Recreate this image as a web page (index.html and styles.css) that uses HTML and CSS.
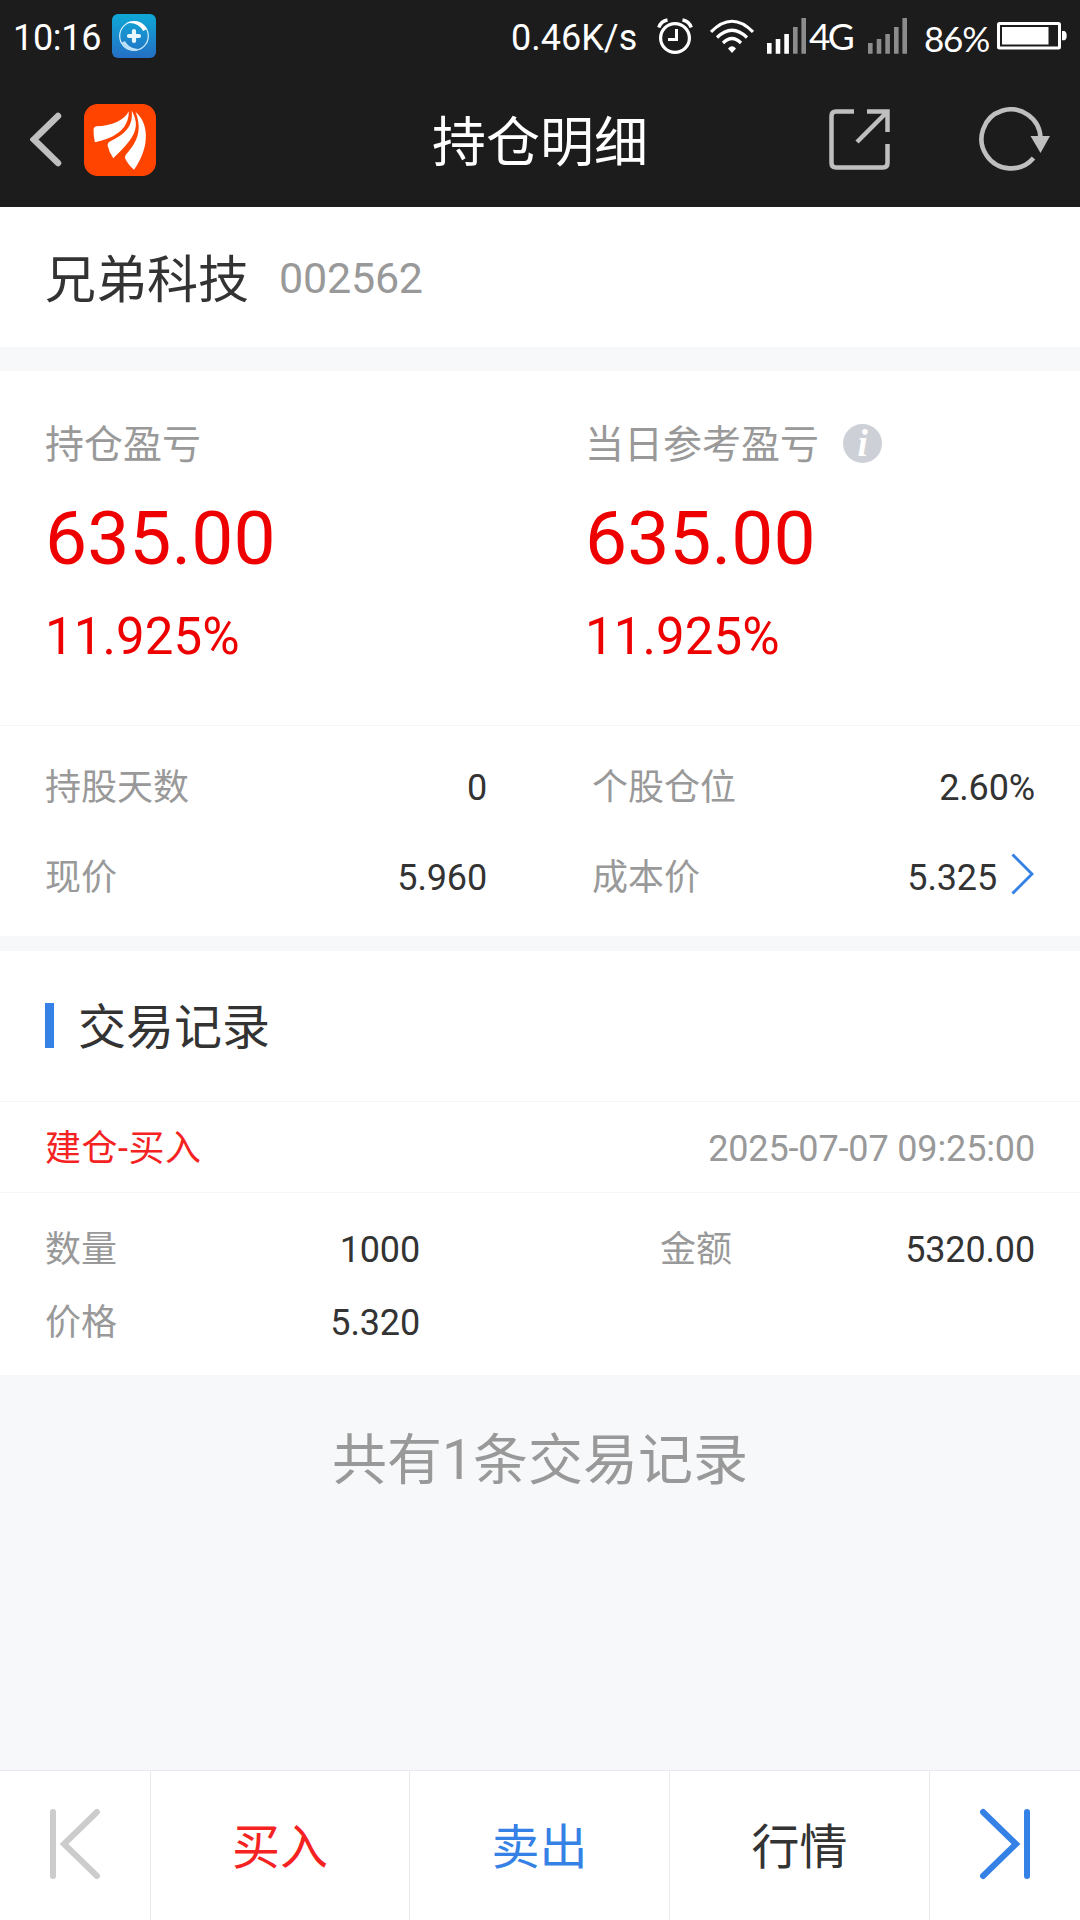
FILE: index.html
```html
<!DOCTYPE html>
<html lang="zh-CN">
<head>
<meta charset="utf-8">
<title>持仓明细</title>
<link rel="stylesheet" href="styles.css">
</head>
<body>
<div class="page">
  <div class="status">
    <span class="clock">10:16</span>
    <svg class="app-badge" width="44" height="44" viewBox="0 0 44 44">
      <defs>
        <linearGradient id="badge" x1="0" y1="0" x2="0" y2="1"><stop offset="0" stop-color="#0ea8d6"/><stop offset="1" stop-color="#246fc4"/></linearGradient>
      </defs>
      <rect width="44" height="44" rx="6" fill="url(#badge)"/>
      <circle cx="22" cy="22" r="14.3" fill="none" stroke="#d8effb" stroke-width="1.2"/>
      <path d="M14 9.5 C21 5 31 7 35 15 L31 17 C28 11 21 8 14 9.5Z" fill="#fff"/>
      <path d="M30 34.5 C23 39 13 37 9 29 L13 27 C16 33 23 36 30 34.5Z" fill="#b9e0f7"/>
      <path d="M22 17v10M17 22h10" stroke="#e8f6fd" stroke-width="4.2" stroke-linecap="round"/>
    </svg>
    <div class="status-right">
      <span class="speed">0.46K/s</span>
      <svg class="alarm" width="36" height="36" viewBox="0 0 36 36" fill="none" stroke="#fff">
        <circle cx="18" cy="20" r="14.4" stroke-width="3.2"/>
        <path d="M19.5 11v10.5H11" stroke-width="3"/>
        <path d="M1.8 9.5Q4 3 10.5 2M25.5 2Q32 3 34.2 9.5" stroke-width="3.4"/>
      </svg>
      <svg class="wifi" width="44" height="35" viewBox="0 0 44 35" fill="none" stroke="#fff" stroke-width="3.2">
        <path d="M1 13Q22 -8.500 43 13M7 18.500Q22 4 37 18.500M13 24Q22 15 31 24"/>
        <path d="M22 34l-4-4.500q4-4.500 8 0z" fill="#fff" stroke="none"/>
      </svg>
      <svg class="signal" width="39" height="36" viewBox="0 0 39 36">
        <path d="M0 25h4.600v10.700H0zM8.700 21h4.600v14.700H8.700zM17.300 16h4.600v19.700h-4.600z" fill="#fff"/>
        <path d="M26 9h4.600v26.700H26zM34.400 0H39v35.700h-4.600z" fill="#8c8c8c"/>
      </svg>
      <span class="net">4G</span>
      <svg class="signal-off" width="39" height="36" viewBox="0 0 39 36">
        <path d="M0 25h4.600v10.700H0zM8.700 21h4.600v14.700H8.700zM17.300 16h4.600v19.700h-4.600zM26 9h4.600v26.700H26zM34.400 0H39v35.700h-4.600z" fill="#8c8c8c"/>
      </svg>
      <span class="percent">86%</span>
      <svg class="battery" width="70" height="28" viewBox="0 0 70 28">
        <rect x="1.500" y="1.500" width="61" height="24.500" rx="1" fill="none" stroke="#fff" stroke-width="3"/>
        <path d="M5 5h46.500v17.500H5zM65 9h2.500q2.200 1 2.200 4.700t-2.200 4.600H65z" fill="#fff"/>
      </svg>
    </div>
  </div>

  <header class="nav">
    <svg class="back" width="32" height="56" viewBox="0 0 32 56"><path d="M28 4L4 27.500L28 51" fill="none" stroke="#bfbfbf" stroke-width="6.500" stroke-linecap="round"/></svg>
    <svg class="logo" width="72" height="72" viewBox="252 309 219 219">
      <rect x="252" y="309" width="219" height="219" rx="42" fill="#ff4400"/>
      <g fill="#fff">
        <path d="M388 331C376 358 336 375 290 377Q281 379 281 388Q281 408 285 425C335 416 390 390 388 331Z"/>
        <path d="M397 329C424 378 410 410 341 474Q328 455 324 436Q323 427 331 423C380 400 402 375 397 329Z"/>
        <path d="M409 333C445 362 458 432 404 509Q386 494 377 474Q375 467 381 461C422 415 426 380 409 333Z"/>
      </g>
    </svg>
    <h1 class="nav-title">持仓明细</h1>
    <svg class="share" width="62" height="62" viewBox="0 0 62 62" fill="none" stroke="#bfbfbf" stroke-width="4.500">
      <path d="M25 2.500H7Q2.500 2.500 2.500 7V54Q2.500 58.500 7 58.500H54Q58.500 58.500 58.500 54V35"/>
      <path d="M38 2.500H58.500V23M58 3L28 33"/>
    </svg>
    <svg class="refresh" width="72" height="66" viewBox="0 0 72 66">
      <path d="M54.500 51A29.500 29.500 0 1 1 61.500 31" fill="none" stroke="#bfbfbf" stroke-width="4.600"/>
      <path d="M51.500 29H71L61.500 46z" fill="#bfbfbf"/>
    </svg>
  </header>

  <section class="stock">
    <span class="stock-name">兄弟科技</span>
    <span class="stock-code">002562</span>
  </section>

  <section class="profit">
    <div class="profit-col">
      <div class="profit-label">持仓盈亏</div>
      <div class="profit-value">635.00</div>
      <div class="profit-rate">11.925%</div>
    </div>
    <div class="profit-col">
      <div class="profit-label">当日参考盈亏<span class="info">i</span></div>
      <div class="profit-value">635.00</div>
      <div class="profit-rate">11.925%</div>
    </div>
  </section>

  <section class="facts">
    <div class="fact"><span>持股天数</span><b>0</b></div>
    <div class="fact"><span>个股仓位</span><b>2.60%</b></div>
    <div class="fact"><span>现价</span><b>5.960</b></div>
    <div class="fact"><span>成本价</span><b>5.325</b>
      <svg class="more" width="23" height="42" viewBox="0 0 23 42"><path d="M1.500 1.500L21 21L1.500 40.500" fill="none" stroke="#3581e6" stroke-width="3"/></svg>
    </div>
  </section>

  <section class="records">
    <h2 class="records-title">交易记录</h2>
    <div class="record-head"><span class="record-type">建仓-买入</span><span class="record-time">2025-07-07 09:25:00</span></div>
    <div class="record-body">
      <div class="fact"><span>数量</span><b>1000</b></div>
      <div class="fact"><span>金额</span><b>5320.00</b></div>
      <div class="fact"><span>价格</span><b>5.320</b></div>
    </div>
  </section>

  <p class="total">共有1条交易记录</p>

  <footer class="actions">
    <div class="action"><svg width="52" height="72" viewBox="0 0 52 72" fill="none" stroke="#ccc" stroke-width="6" stroke-linecap="round"><path d="M4 4V68M48 4L15 36L48 68"/></svg></div>
    <div class="action buy">买入</div>
    <div class="action sell">卖出</div>
    <div class="action quote">行情</div>
    <div class="action"><svg width="52" height="72" viewBox="0 0 52 72" fill="none" stroke="#3581e6" stroke-width="6" stroke-linecap="round"><path d="M48 4V68M4 4L37 36L4 68"/></svg></div>
  </footer>
</div>
</body>
</html>
```
FILE: styles.css
```css
* { box-sizing: border-box; }
body {
  margin: 0;
  font-family: Roboto, "Noto Sans CJK SC", sans-serif;
  color: #333;
  background: #f7f8fa;
}
h1, h2, p { margin: 0; font-weight: 400; }
svg { display: block; flex: none; }
.page {
  width: 1080px;
  height: 1920px;
  display: flex;
  flex-direction: column;
  overflow: hidden;
}

.status {
  height: 72px;
  padding: 0 13px 0 13px;
  display: flex;
  align-items: center;
  background: #1c1c1c;
  color: #fff;
  font-size: 36px;
  line-height: 42px;
  white-space: nowrap;
}
.clock { width: 99px; padding-top: 3px; letter-spacing: -0.3px; }
.status-right { margin-left: auto; display: flex; align-items: center; }
.speed { width: 146px; padding-top: 3px; }
.alarm { margin-right: 17px; }
.wifi { margin-right: 13px; }
.net { width: 62px; padding-left: 3px; font-family: Lato, sans-serif; font-size: 37px; letter-spacing: -2.6px; }
.percent { width: 90px; padding: 3px 0 0 17px; font-family: Lato, sans-serif; font-size: 35px; letter-spacing: -1.2px; }

.nav {
  height: 135px;
  padding: 0 30px;
  display: flex;
  align-items: center;
  background: #1c1c1c;
  color: #fff;
}
.logo { margin-left: 22px; }
.nav-title { width: 216px; margin: 8px 181px 0 276px; font-size: 54px; line-height: 66px; white-space: nowrap; }
.refresh { margin-left: 88px; }

.stock {
  height: 140px;
  padding: 4px 45px 0;
  display: flex;
  align-items: center;
  gap: 30px;
  background: #fff;
}
.stock-name { padding-top: 3px; font-size: 51px; line-height: 64px; }
.stock-code { margin-top: -3px; font-size: 43px; line-height: 56px; letter-spacing: -0.2px; color: #999; }

.profit {
  margin-top: 24px;
  height: 354px;
  padding: 51px 45px 0;
  display: grid;
  grid-template-columns: 540px 1fr;
  background: #fff;
}
.profit-label { display: flex; align-items: center; font-size: 39px; line-height: 47px; color: #999; }
.info {
  width: 39px;
  height: 39px;
  margin: -5px 0 0 24px;
  border-radius: 50%;
  background: #cdd0d6;
  color: #fff;
  font: italic 700 37px/40px "Liberation Serif", serif;
  text-align: center;
}
.profit-value { margin-top: 24px; font-size: 75px; line-height: 90px; color: #ee0000; }
.profit-rate { margin-top: 24px; font-size: 51px; line-height: 60px; letter-spacing: 0.1px; color: #ee0000; }

.facts {
  height: 211px;
  padding: 17px 45px 0;
  border-top: 1px solid #f4f5f6;
  display: grid;
  grid-template-columns: 442px 443px;
  grid-auto-rows: 90px;
  column-gap: 105px;
  background: #fff;
}
.fact { display: flex; align-items: center; font-size: 36px; line-height: 44px; }
.fact span { color: #999; }
.fact b { margin-left: auto; font-weight: 400; letter-spacing: -0.15px; }
.more { margin: -9px 1px 0 14px; }

.records { margin-top: 15px; height: 424px; background: #fff; }
.records-title {
  height: 150px;
  padding: 4px 45px 0;
  display: flex;
  align-items: center;
  font-size: 48px;
  line-height: 60px;
}
.records-title::before { content: ""; width: 9px; height: 45px; margin: -5px 24px 0 0; background: #3581e6; }
.record-head {
  height: 91px;
  padding: 3px 45px 0;
  border-top: 1px solid #f4f5f6;
  display: flex;
  align-items: center;
  justify-content: space-between;
  font-size: 36px;
  line-height: 44px;
}
.record-type { color: #f52222; letter-spacing: 0.5px; }
.record-time { color: #999; letter-spacing: -0.14px; }
.record-body {
  padding: 20px 45px 0;
  border-top: 1px solid #f4f5f6;
  display: grid;
  grid-template-columns: 375px 375px;
  column-gap: 240px;
  grid-auto-rows: 73px;
}

.total { padding-top: 50px; font-size: 55px; line-height: 70px; text-align: center; color: #999; }

.actions {
  margin-top: auto;
  height: 150px;
  display: grid;
  grid-template-columns: 151px 259px 260px 260px 150px;
  border-top: 1px solid #e9ebee;
  background: #fff;
}
.action {
  display: flex;
  align-items: center;
  justify-content: center;
  padding-top: 5px;
  border-right: 1px solid #ebebeb;
  font-size: 48px;
  line-height: 60px;
}
.action:last-child { border-right: 0; }
.action svg { margin-top: -9px; }
.buy { color: #f52222; }
.sell { color: #3581e6; }
```
